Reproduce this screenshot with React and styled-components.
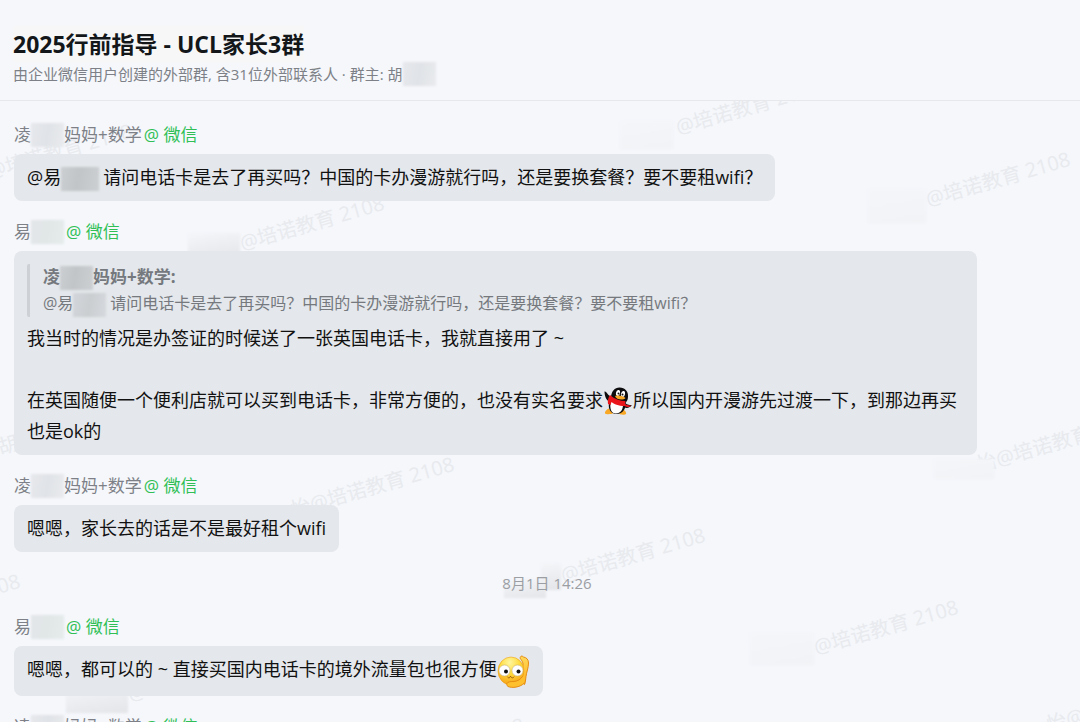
// src/App.jsx
import styled, { createGlobalStyle } from "styled-components";

const colors = {
  page: "#f5f7fb",
  bubble: "#e4e7eb",
  line: "#e6e8eb",
  title: "#14171a",
  text: "#111111",
  muted: "#7d8187",
  quote: "#75797e",
  quoteBar: "#cdd0d4",
  time: "#9b9ea3",
  wechat: "#2fbf55",
  watermark: "#e8eaee",
};

const GlobalStyle = createGlobalStyle`
  * {
    box-sizing: border-box;
  }

  body {
    margin: 0;
    background: ${colors.page};
    color: ${colors.text};
    font-family: "Open Sans", "Noto Sans CJK SC", sans-serif;
  }
`;

const Page = styled.div`
  display: flex;
  flex-direction: column;
  height: 100vh;
  overflow: hidden;
`;

const Header = styled.header`
  padding: 26px 13px 14px;
  border-bottom: 1px solid ${colors.line};
`;

const Title = styled.h1`
  width: fit-content;
  margin: 0;
  font-size: 23px;
  line-height: 36px;
  font-weight: 700;
  color: ${colors.title};
  background: #f7f7f8;
`;

const Subtitle = styled.p`
  display: flex;
  align-items: center;
  margin: 0;
  font-size: 15px;
  line-height: 22px;
  color: ${colors.muted};
`;

const Chat = styled.main`
  position: relative;
  flex: 1;
  min-height: 0;
  overflow: hidden;
`;

const MessageList = styled.div`
  position: relative;
  display: flex;
  flex-direction: column;
  gap: 19px;
  padding: 22px 0 0 14px;
`;

const Message = styled.article`
  display: flex;
  flex-direction: column;
  align-items: flex-start;
  gap: 7px;
`;

const Sender = styled.div`
  display: flex;
  align-items: center;
  font-size: 17px;
  line-height: 24px;
  color: ${colors.muted};
`;

const Source = styled.span`
  margin-left: 2px;
  color: ${colors.wechat};
`;

const Bubble = styled.div`
  max-width: calc(100% - 103px);
  padding: 8px 13px;
  border-radius: 8px;
  background: ${colors.bubble};
  font-size: 18px;
  line-height: 31px;
`;

const Line = styled.p`
  margin: 0;
  min-height: 31px;
`;

const Quote = styled.blockquote`
  margin: 5px 0 6px;
  padding-left: 13px;
  border-left: 3px solid ${colors.quoteBar};
  border-radius: 2px;
  font-size: 16px;
  line-height: 26px;
  color: ${colors.quote};
`;

const QuoteName = styled.div`
  font-size: 17px;
  font-weight: 700;
`;

const Time = styled.time`
  align-self: center;
  margin-bottom: 1px;
  font-size: 15px;
  line-height: 24px;
  color: ${colors.time};
`;

const tones = {
  light: "linear-gradient(100deg, #e6e8ec, #e0e3e7 50%, #e9ebee)",
  green: "linear-gradient(100deg, #e3e6e9, #e1e6e7 50%, #e6eceb)",
  dark: "linear-gradient(100deg, #cccfd2, #c2c5c8 45%, #cdd0d3)",
  mid: "linear-gradient(100deg, #d3d6da, #cbced1 50%, #d6d9dd)",
};

// Soft patch over the hidden part of a name
const Mask = styled.span`
  display: inline-block;
  flex: none;
  width: ${({ $wide }) => ($wide ? "38px" : "33px")};
  height: 24px;
  margin-right: ${({ $gap }) => ($gap ? "4px" : "0")};
  vertical-align: middle;
  background: ${({ $tone }) => tones[$tone || "light"]};
  filter: blur(1px);
`;

const WatermarkLayer = styled.div`
  position: absolute;
  inset: 0;
  overflow: hidden;
  pointer-events: none;
`;

const Mark = styled.span`
  position: absolute;
  left: ${({ $x }) => $x}px;
  top: ${({ $y }) => $y}px;
  font-size: 20px;
  line-height: 28px;
  white-space: nowrap;
  color: ${colors.watermark};
  transform: rotate(-16deg);
  transform-origin: 10px 14px;
`;

const MarkPrefix = styled.span`
  position: absolute;
  right: 100%;
`;

const Smudge = styled.span`
  position: absolute;
  left: ${({ $x }) => $x}px;
  top: ${({ $y }) => $y}px;
  width: ${({ $w }) => $w}px;
  height: ${({ $h }) => $h}px;
  background: linear-gradient(
    170deg,
    #f4f6fa,
    ${({ $strong }) => ($strong ? "#e3e5e8" : "#f1f3f6")}
  );
  filter: blur(1px);
`;

const EmojiSvg = styled.svg`
  display: inline-block;
  vertical-align: middle;
`;

const PenguinIcon = styled(EmojiSvg)`
  width: 28px;
  height: 28px;
  margin: -2px 1px 0;
`;

const FaceIcon = styled(EmojiSvg)`
  width: 33px;
  height: 33px;
`;

const Penguin = () => (
  <PenguinIcon viewBox="0 0 56 56" role="img" aria-label="企鹅">
    <path d="M9 43C4 46 1 50 2 53c2 2 13 2 17-1z" fill="#f9a825" />
    <path d="M30 53c3 3 12 3 14 1 1-3-1-6-5-9z" fill="#f9a825" />
    <path d="M1 9c2-1 5 3 8 7l7 5-5 9C5 27 1 18 1 9z" fill="#0c0c0e" />
    <path d="M39 30c6 5 11 6 16 6 1 2-4 5-9 6-4 0-8-3-11-6z" fill="#0c0c0e" />
    <path d="M31 1c11 0 18 8 17 18 0 6-2 9-5 13 1 12-5 21-18 22C13 53 8 44 10 32c1-5 3-8 4-12C15 9 21 1 31 1z" fill="#0c0c0e" />
    <path d="M14 27c8 6 16 8 24 8 0 11-5 18-14 18-9 0-14-9-10-26z" fill="#fff" />
    <path d="M12 16c9 8 20 12 31 12l-1 6c4 2 9 3 12 3-3 4-9 4-13 1-12 0-21-4-26-8l-2 6-5-2c-1-6 0-12 4-18z" fill="#e9151b" />
    <ellipse cx="28" cy="12" rx="4" ry="6" fill="#fff" transform="rotate(12 28 12)" />
    <ellipse cx="38" cy="14" rx="4" ry="6" fill="#fff" transform="rotate(12 38 14)" />
    <circle cx="29" cy="13" r="2" fill="#111" />
    <circle cx="37" cy="15" r="2" fill="#111" />
    <path d="M22 18c8-2 16 0 21 4-4 5-19 4-21-4z" fill="#f9a825" />
  </PenguinIcon>
);

const Face = () => (
  <FaceIcon viewBox="0 0 66 66" role="img" aria-label="捂脸张望">
    <defs>
      <radialGradient id="skin" cx="0.45" cy="0.2" r="0.85">
        <stop offset="0" stopColor="#fff6a0" />
        <stop offset="0.45" stopColor="#ffdb3d" />
        <stop offset="1" stopColor="#f59a12" />
      </radialGradient>
      <linearGradient id="arm" x1="0" y1="0" x2="0" y2="1">
        <stop offset="0" stopColor="#ffd95a" />
        <stop offset="1" stopColor="#ffb21f" />
      </linearGradient>
    </defs>
    <path
      d="M47 4c1-3 4-2 6 0 6 1 10 5 10 12 0 10-4 18-5 27-1 7-1 12-3 16l-9-12 4-17c1-5 2-9 2-12 0-3-2-6-4-9-2-2-2-4-1-5z"
      fill="url(#arm)"
      stroke="#e58c12"
      strokeWidth="2"
    />
    <ellipse cx="28" cy="32" rx="26" ry="28" fill="url(#skin)" stroke="#e8940f" strokeWidth="1" />
    <path
      d="M56 40c-1 8-1 14-3 18-8 6-19 8-28 6-5-1-6-4-5-7 2-4 8-4 14-4 8-1 13-4 17-10z"
      fill="#ffc02e"
    />
    <path
      d="M54 57c-8 7-20 9-29 7-5-1-6-4-5-7 2-4 8-4 14-4 8-1 13-4 17-10"
      fill="none"
      stroke="#e58c12"
      strokeWidth="2"
      strokeLinecap="round"
    />
    <circle cx="15" cy="31" r="11" fill="#fff" stroke="#b9a577" strokeWidth="1" />
    <circle cx="41" cy="31" r="11" fill="#fff" stroke="#b9a577" strokeWidth="1" />
    <circle cx="18" cy="33" r="4" fill="#111" />
    <circle cx="43" cy="33" r="4" fill="#111" />
    <path d="M21 44c2 3 5 2 6-2 1 4 5 5 7 2" fill="none" stroke="#9a5b0c" strokeWidth="2" strokeLinecap="round" />
  </FaceIcon>
);

const watermark = "@培诺教育 2108";

const marks = [
  { x: 676, y: 10 },
  { x: 926, y: 82 },
  { x: -12, y: 54 },
  { x: 240, y: 126 },
  { x: 996, y: 342, prefix: "怡" },
  { x: -2, y: 330, text: "胡" },
  { x: 310, y: 387, prefix: "怡" },
  { x: 561, y: 458 },
  { x: -124, y: 504 },
  { x: 814, y: 530 },
  { x: 1066, y: 602, prefix: "怡" },
  { x: 128, y: 577 },
  { x: 380, y: 648 },
];

const smudges = [
  { x: 620, y: 20, w: 53, h: 28 },
  { x: 868, y: 88, w: 58, h: 34 },
  { x: 188, y: 132, w: 52, h: 26, strong: true },
  { x: 934, y: 358, w: 60, h: 20 },
  { x: 541, y: 462, w: 20, h: 27, strong: true },
  { x: 504, y: 478, w: 42, h: 19, strong: true },
  { x: 750, y: 532, w: 64, h: 32 },
  { x: 66, y: 584, w: 62, h: 28, strong: true },
];

const Watermark = () => (
  <WatermarkLayer aria-hidden="true">
    {marks.map(({ x, y, prefix, text }) => (
      <Mark key={`${x}-${y}`} $x={x} $y={y}>
        {prefix && <MarkPrefix>{prefix}</MarkPrefix>}
        {text || watermark}
      </Mark>
    ))}
    {smudges.map(({ x, y, w, h, strong }) => (
      <Smudge key={`${x}-${y}`} $x={x} $y={y} $w={w} $h={h} $strong={strong} />
    ))}
  </WatermarkLayer>
);

const ParentSender = () => (
  <Sender>
    凌<Mask />妈妈+数学<Source>@ 微信</Source>
  </Sender>
);

const YiSender = () => (
  <Sender>
    易<Mask $tone="green" />
    <Source>@ 微信</Source>
  </Sender>
);

const question = "请问电话卡是去了再买吗？中国的卡办漫游就行吗，还是要换套餐？要不要租wifi？";

export default function App() {
  return (
    <>
      <GlobalStyle />
      <Page>
        <Header>
          <Title>2025行前指导 - UCL家长3群</Title>
          <Subtitle>
            由企业微信用户创建的外部群, 含31位外部联系人 · 群主: 胡
            <Mask />
          </Subtitle>
        </Header>

        <Chat>
          <Watermark />
          <MessageList>
            <Message>
              <ParentSender />
              <Bubble>
                <Line>
                  @易
                  <Mask $tone="dark" $wide $gap />
                  {question}
                </Line>
              </Bubble>
            </Message>

            <Message>
              <YiSender />
              <Bubble>
                <Quote>
                  <QuoteName>
                    凌<Mask $tone="dark" />妈妈+数学:
                  </QuoteName>
                  <div>
                    @易
                    <Mask $tone="mid" $gap />
                    {question}
                  </div>
                </Quote>
                <Line>我当时的情况是办签证的时候送了一张英国电话卡，我就直接用了 ~</Line>
                <Line />
                <Line>
                  在英国随便一个便利店就可以买到电话卡，非常方便的，也没有实名要求
                  <Penguin />
                  所以国内开漫游先过渡一下，到那边再买也是ok的
                </Line>
              </Bubble>
            </Message>

            <Message>
              <ParentSender />
              <Bubble>
                <Line>嗯嗯，家长去的话是不是最好租个wifi</Line>
              </Bubble>
            </Message>

            <Time>8月1日 14:26</Time>

            <Message>
              <YiSender />
              <Bubble>
                <Line>
                  嗯嗯，都可以的 ~ 直接买国内电话卡的境外流量包也很方便
                  <Face />
                </Line>
              </Bubble>
            </Message>

            <Message>
              <ParentSender />
            </Message>
          </MessageList>
        </Chat>
      </Page>
    </>
  );
}
